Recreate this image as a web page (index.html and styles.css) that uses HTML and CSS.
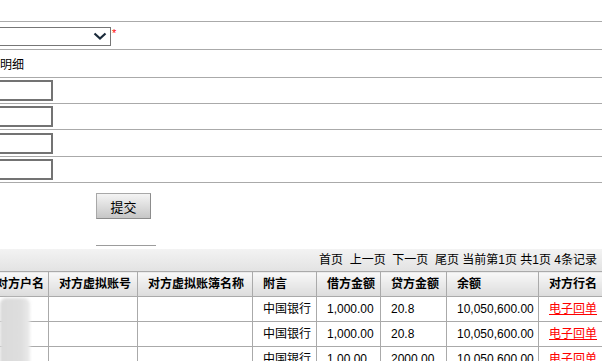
FILE: index.html
```html
<!DOCTYPE html>
<html lang="zh-CN">
<head>
<meta charset="utf-8">
<title>明细查询</title>
<link rel="stylesheet" href="styles.css">
</head>
<body>
<div class="form">
  <div class="row r0"></div>
  <div class="row r1">
    <div class="cell">
      <div class="select">
        <svg class="chev" width="14" height="10" viewBox="0 0 14 10"><path d="M1.5 2.5 L7 7.5 L12.5 2.5" fill="none" stroke="#1a2a3a" stroke-width="2.2"/></svg>
      </div>
      <span class="req">*</span>
    </div>
  </div>
  <div class="row r2"><span class="label">明细</span></div>
  <div class="row r3"><div class="cell"><input class="txt" type="text"></div></div>
  <div class="row r3"><div class="cell"><input class="txt" type="text"></div></div>
  <div class="row r5"><div class="cell"><input class="txt" type="text"></div></div>
  <div class="row r3"><div class="cell"><input class="txt" type="text"></div></div>
</div>
<div class="actions">
  <button class="btn" type="button">提交</button>
  <div class="rule"></div>
</div>
<div class="pager">首页&nbsp;&nbsp;上一页&nbsp;&nbsp;下一页&nbsp;&nbsp;尾页&nbsp;当前第1页&nbsp;共1页&nbsp;4条记录</div>
<div class="grid-wrap">
  <table class="grid">
    <colgroup>
      <col class="c1"><col class="c2"><col class="c3"><col class="c4"><col class="c5"><col class="c6"><col class="c7"><col class="c8">
    </colgroup>
    <thead>
      <tr><th>对方户名</th><th>对方虚拟账号</th><th>对方虚拟账簿名称</th><th>附言</th><th>借方金额</th><th>贷方金额</th><th>余额</th><th>对方行名</th></tr>
    </thead>
    <tbody>
      <tr><td></td><td></td><td></td><td>中国银行</td><td>1,000.00</td><td>20.8</td><td>10,050,600.00</td><td><a href="#">电子回单</a></td></tr>
      <tr><td></td><td></td><td></td><td>中国银行</td><td>1,000.00</td><td>20.8</td><td>10,050,600.00</td><td><a href="#">电子回单</a></td></tr>
      <tr><td></td><td></td><td></td><td>中国银行</td><td>1,00.00</td><td>2000.00</td><td>10,050,600.00</td><td><a href="#">电子回单</a></td></tr>
    </tbody>
  </table>
  <div class="redact"></div>
</div>
</body>
</html>
```
FILE: styles.css
```css
html, body {
  margin: 0;
  padding: 0;
  overflow: hidden;
  background: #fff;
}
body {
  font-family: "Liberation Sans", "Noto Sans CJK SC", sans-serif;
  font-size: 12px;
  color: #000;
  width: 602px;
}
.form {
  display: flex;
  flex-direction: column;
}
.row {
  border-bottom: 1px solid #aaaaaa;
  display: flex;
  align-items: center;
}
.r0 { height: 21px; }
.r1 { height: 27px; }
.r2 { height: 27px; }
.r3 { height: 25px; }
.r5 { height: 26px; }
.cell {
  margin-left: -27px;
  display: flex;
  align-items: center;
}
.select {
  box-sizing: border-box;
  width: 138px;
  height: 19px;
  margin-top: 1px;
  border: 1px solid #767676;
  background: #fff;
  display: flex;
  align-items: center;
  justify-content: flex-end;
  padding-right: 3px;
}
.chev { display: block; }
.req {
  color: #ff0000;
  font-size: 11px;
  line-height: 11px;
  margin-left: 1px;
  margin-top: -5px;
}
.label {
  font-size: 12px;
  line-height: 14px;
  padding-top: 2px;
}
.txt {
  box-sizing: border-box;
  width: 80px;
  height: 21px;
  margin: 0;
  border: 2px solid #737373;
  background: #fff;
  padding: 0;
}
.actions {
  padding: 10px 0 0 96px;
  height: 54px;
  display: flex;
  flex-direction: column;
  align-items: flex-start;
}
.btn {
  box-sizing: border-box;
  width: 55px;
  height: 26px;
  margin: 0;
  padding: 0;
  border: 1px solid #a8a8a8;
  border-right-color: #8c8c8c;
  border-bottom-color: #8c8c8c;
  background: linear-gradient(#f4f4f4, #c6c6c6);
  font-family: "Liberation Sans", "Noto Sans CJK SC", sans-serif;
  font-size: 13px;
  color: #000;
}
.rule {
  width: 60px;
  height: 1px;
  background: #9c9c9c;
  margin-top: 26px;
}
.pager {
  margin-top: 2px;
  height: 22px;
  line-height: 22px;
  background: linear-gradient(#f3f3f3, #e3e3e3);
  text-align: right;
  padding-right: 5px;
  white-space: nowrap;
}
.grid-wrap {
  position: relative;
}
.grid {
  border-collapse: collapse;
  table-layout: fixed;
  width: 620px;
  margin-left: -15px;
}
.c1 { width: 63px; }
.c2 { width: 89px; }
.c3 { width: 115px; }
.c4 { width: 64px; }
.c5 { width: 64px; }
.c6 { width: 66px; }
.c7 { width: 92px; }
.c8 { width: 67px; }
.grid th, .grid td {
  border: 1px solid #aaaaaa;
  height: 24px;
  padding: 0 0 0 10px;
  text-align: left;
  white-space: nowrap;
  overflow: hidden;
  line-height: 14px;
}
.grid th {
  font-weight: bold;
  background: linear-gradient(#f8f8f8, #dcdcdc);
}
.grid td a {
  color: #ff0000;
  text-decoration: underline;
}
.redact {
  position: absolute;
  left: 0;
  top: 27px;
  width: 30px;
  height: 80px;
  border-radius: 6px 6px 0 0;
  background: linear-gradient(90deg, #dadada 0, #dedede 70%, #ebebeb 100%);
  filter: blur(1.5px);
}
```
